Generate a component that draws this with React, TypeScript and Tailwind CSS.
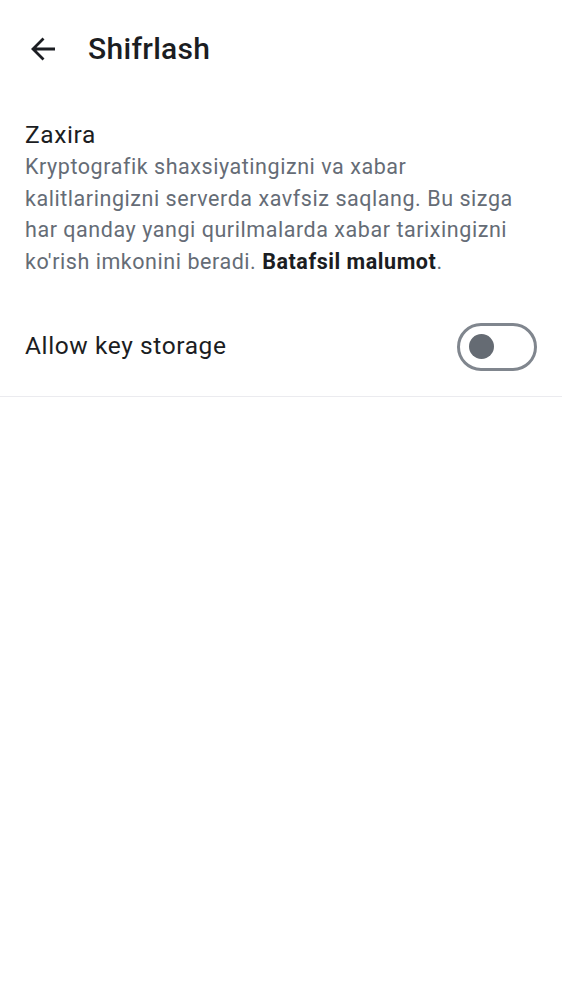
import { useState } from "react";

const ArrowBack = () => (
  <svg width="26" height="26" viewBox="0 0 26 26" fill="none">
    <path
      d="M25 13H3.5M13.5 2.5L3 13l10.5 10.5"
      stroke="#1b1d22"
      strokeWidth="2.8"
    />
  </svg>
);

const App = () => {
  const [allowed, setAllowed] = useState(false);

  return (
    <div className="min-h-screen w-full bg-white font-['Roboto',sans-serif] text-[#1b1d22]">
      <div className="flex h-[98px] items-center gap-[32px] pl-[30px]">
        <button className="flex h-[26px] w-[26px] items-center justify-center">
          <ArrowBack />
        </button>
        <h1 className="text-[30px] font-medium leading-none tracking-[0.3px]">Shifrlash</h1>
      </div>

      <div className="pl-[25px] pr-[20px] pt-[22px]">
        <p className="text-[24.5px] leading-[30px] tracking-[0.6px]">Zaxira</p>
        <p className="mt-[1px] text-[21.5px] leading-[31.5px] tracking-[0.55px] text-[#656c76]">
          Kryptografik shaxsiyatingizni va xabar kalitlaringizni serverda
          xavfsiz saqlang. Bu sizga har qanday yangi qurilmalarda xabar
          tarixingizni ko'rish imkonini beradi.{" "}
          <span className="font-bold text-[#1b1d22]">Batafsil malumot</span>.
        </p>
      </div>

      <div className="mt-[20px] flex h-[100px] items-center justify-between border-b border-[#ebebef] pl-[25px] pr-[25px]">
        <span className="text-[24.5px] tracking-[0.6px]">Allow key storage</span>
        <button
          onClick={() => setAllowed(!allowed)}
          className="flex h-[48px] w-[80px] items-center rounded-full border-[3px] border-[#80868e] px-[9px]"
        >
          <span className="h-[25px] w-[25px] rounded-full bg-[#656b73]" />
        </button>
      </div>
    </div>
  );
};

export default App;
